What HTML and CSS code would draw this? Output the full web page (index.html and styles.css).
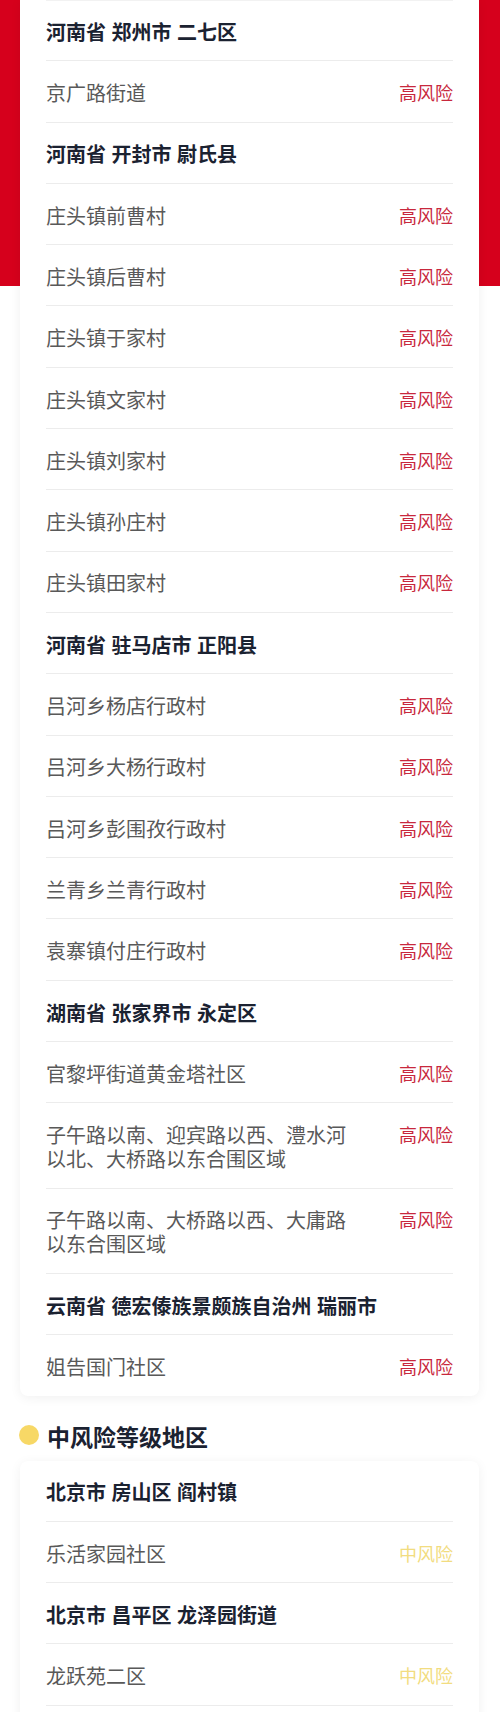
FILE: index.html
```html
<!DOCTYPE html>
<html lang="zh-CN">
<head>
<meta charset="utf-8">
<title>风险等级地区</title>
<link rel="stylesheet" href="styles.css">
</head>
<body>
<div class="page">
  <section class="card card-cont">
    <div class="row head">河南省 郑州市 二七区</div>
    <div class="row"><span class="name">京广路街道</span><span class="tag high">高风险</span></div>
    <div class="row head">河南省 开封市 尉氏县</div>
    <div class="row"><span class="name">庄头镇前曹村</span><span class="tag high">高风险</span></div>
    <div class="row"><span class="name">庄头镇后曹村</span><span class="tag high">高风险</span></div>
    <div class="row"><span class="name">庄头镇于家村</span><span class="tag high">高风险</span></div>
    <div class="row"><span class="name">庄头镇文家村</span><span class="tag high">高风险</span></div>
    <div class="row"><span class="name">庄头镇刘家村</span><span class="tag high">高风险</span></div>
    <div class="row"><span class="name">庄头镇孙庄村</span><span class="tag high">高风险</span></div>
    <div class="row"><span class="name">庄头镇田家村</span><span class="tag high">高风险</span></div>
    <div class="row head">河南省 驻马店市 正阳县</div>
    <div class="row"><span class="name">吕河乡杨店行政村</span><span class="tag high">高风险</span></div>
    <div class="row"><span class="name">吕河乡大杨行政村</span><span class="tag high">高风险</span></div>
    <div class="row"><span class="name">吕河乡彭围孜行政村</span><span class="tag high">高风险</span></div>
    <div class="row"><span class="name">兰青乡兰青行政村</span><span class="tag high">高风险</span></div>
    <div class="row"><span class="name">袁寨镇付庄行政村</span><span class="tag high">高风险</span></div>
    <div class="row head">湖南省 张家界市 永定区</div>
    <div class="row"><span class="name">官黎坪街道黄金塔社区</span><span class="tag high">高风险</span></div>
    <div class="row"><span class="name">子午路以南、迎宾路以西、澧水河以北、大桥路以东合围区域</span><span class="tag high">高风险</span></div>
    <div class="row"><span class="name">子午路以南、大桥路以西、大庸路以东合围区域</span><span class="tag high">高风险</span></div>
    <div class="row head">云南省 德宏傣族景颇族自治州 瑞丽市</div>
    <div class="row last"><span class="name">姐告国门社区</span><span class="tag high">高风险</span></div>
  </section>

  <h2 class="section-title"><span class="dot"></span>中风险等级地区</h2>

  <section class="card card-open">
    <div class="row head">北京市 房山区 阎村镇</div>
    <div class="row"><span class="name">乐活家园社区</span><span class="tag mid">中风险</span></div>
    <div class="row head">北京市 昌平区 龙泽园街道</div>
    <div class="row"><span class="name">龙跃苑二区</span><span class="tag mid">中风险</span></div>
  </section>
</div>
</body>
</html>
```

FILE: styles.css
```css
* {
  box-sizing: border-box;
}

html, body {
  margin: 0;
  padding: 0;
  background: #ffffff;
}

body {
  font-family: "Liberation Sans", "Noto Sans CJK SC", sans-serif;
  -webkit-font-smoothing: antialiased;
}

.page {
  width: 500px;
  padding: 0 21px 40px 20px;
  background: linear-gradient(#d6001c 0, #d6001c 286px, #ffffff 286px);
}

.card {
  background: #ffffff;
  border-radius: 8px;
  box-shadow: 0 2px 12px rgba(0, 0, 0, 0.06);
  padding: 0 26px;
  display: flex;
  flex-direction: column;
}

.card-cont {
  border-top-left-radius: 0;
  border-top-right-radius: 0;
}

.card-cont::before {
  content: "";
  display: block;
  height: 1px;
  margin-bottom: -1px;
  background: #f2f2f2;
}

.card-open {
  padding-bottom: 30px;
}

.row {
  display: flex;
  justify-content: space-between;
  align-items: flex-start;
  padding: 20.75px 0 15.55px;
  border-bottom: 1px solid #ececec;
  line-height: 24px;
}

.row.last {
  border-bottom: none;
}

.head {
  font-size: 20px;
  font-weight: 700;
  color: #1b2231;
}

.name {
  flex: 1;
  margin-right: 44px;
  font-size: 20px;
  color: #595959;
}

.tag {
  font-size: 18px;
  line-height: 24px;
  white-space: nowrap;
}

.tag.high {
  color: #c8283d;
}

.tag.mid {
  color: #f2dc80;
}

.section-title {
  display: flex;
  align-items: flex-start;
  gap: 8px;
  margin: 26px 0 7px -1px;
  font-size: 23px;
  line-height: 32px;
  font-weight: 700;
  color: #1b2231;
}

.dot {
  width: 20px;
  height: 20px;
  margin-top: 3px;
  border-radius: 50%;
  background: #f7d866;
  flex-shrink: 0;
}
```
